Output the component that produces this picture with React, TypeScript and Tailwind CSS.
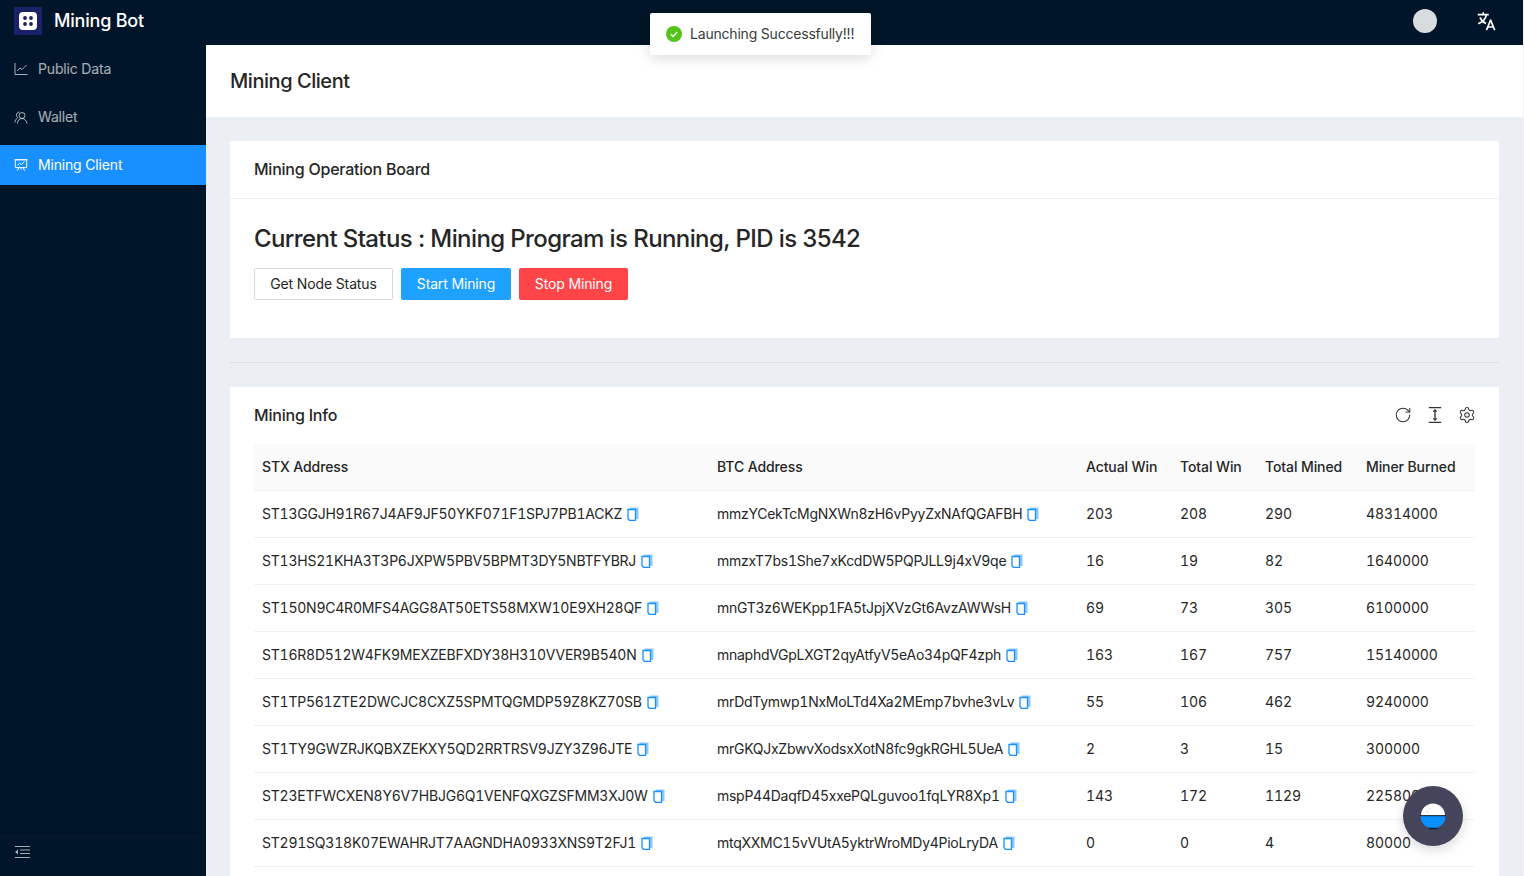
import React from "react";
import { RotateCw, Settings } from "lucide-react";

const rows = [
  ["ST13GGJH91R67J4AF9JF50YKF071F1SPJ7PB1ACKZ", "mmzYCekTcMgNXWn8zH6vPyyZxNAfQGAFBH", "203", "208", "290", "48314000"],
  ["ST13HS21KHA3T3P6JXPW5PBV5BPMT3DY5NBTFYBRJ", "mmzxT7bs1She7xKcdDW5PQPJLL9j4xV9qe", "16", "19", "82", "1640000"],
  ["ST150N9C4R0MFS4AGG8AT50ETS58MXW10E9XH28QF", "mnGT3z6WEKpp1FA5tJpjXVzGt6AvzAWWsH", "69", "73", "305", "6100000"],
  ["ST16R8D512W4FK9MEXZEBFXDY38H310VVER9B540N", "mnaphdVGpLXGT2qyAtfyV5eAo34pQF4zph", "163", "167", "757", "15140000"],
  ["ST1TP561ZTE2DWCJC8CXZ5SPMTQGMDP59Z8KZ70SB", "mrDdTymwp1NxMoLTd4Xa2MEmp7bvhe3vLv", "55", "106", "462", "9240000"],
  ["ST1TY9GWZRJKQBXZEKXY5QD2RRTRSV9JZY3Z96JTE", "mrGKQJxZbwvXodsxXotN8fc9gkRGHL5UeA", "2", "3", "15", "300000"],
  ["ST23ETFWCXEN8Y6V7HBJG6Q1VENFQXGZSFMM3XJ0W", "mspP44DaqfD45xxePQLguvoo1fqLYR8Xp1", "143", "172", "1129", "22580000"],
  ["ST291SQ318K07EWAHRJT7AAGNDHA0933XNS9T2FJ1", "mtqXXMC15vVUtA5yktrWroMDy4PioLryDA", "0", "0", "4", "80000"],
];

function Copy() {
  return (
    <svg width="12" height="14" viewBox="0 0 12 14" className="inline-block ml-[5px] -mt-[2px] align-middle">
      <path d="M2.500 0.500h9v11.500h-2.500V2.500H2.500z" fill="#8cc8ff" />
      <path d="M1 2.500h7.500v11H2.500L1 11.500z" fill="#fff" stroke="#1890ff" strokeWidth="1.300" />
    </svg>
  );
}

function NavItem({ label, active, children }: { label: string; active?: boolean; children: React.ReactNode }) {
  return (
    <div className={`h-10 mb-2 pl-[14px] flex items-center gap-[10px] text-sm tracking-[-0.17px] ${active ? "bg-[#1890ff] text-white" : "text-white/65"}`}>
      <span className="w-[14px] h-[14px] flex items-center justify-center">{children}</span>
      <span>{label}</span>
    </div>
  );
}

export default function App() {
  return (
    <div className="w-[1524px] h-[876px] overflow-hidden relative bg-[#ebeff3] text-[#262626] flex flex-col border-r border-[#f0f2f5]" style={{ fontFamily: "Inter, 'Liberation Sans', sans-serif" }}>
      <header className="h-[45px] shrink-0 bg-[#001529] flex items-center justify-between pl-[14px] pr-[26px] pb-[3px]">
        <div className="flex items-center gap-3">
          <div className="w-7 h-7 bg-[#1b2167] flex items-center justify-center">
            <svg width="18" height="18" viewBox="0 0 18 18">
              <rect width="18" height="18" rx="4" fill="#fff" />
              <circle cx="6" cy="6" r="1.9" fill="#1b2167" />
              <circle cx="12" cy="6" r="1.9" fill="#1b2167" />
              <circle cx="6" cy="12" r="1.9" fill="#1b2167" />
              <circle cx="12" cy="12" r="1.9" fill="#1b2167" />
            </svg>
          </div>
          <span className="text-white text-lg font-medium tracking-[-0.2px]">Mining Bot</span>
        </div>
        <div className="flex items-center gap-[38px]">
          <div className="w-6 h-6 rounded-full bg-[#d9dcdf]" />
          <svg width="22" height="22" viewBox="0 0 24 24" fill="none" stroke="#fff" strokeWidth="1.8" strokeLinejoin="round">
            <path d="M3 5h12M9 2.500V5M12.500 5c-.8 4.500-4 8-9 10M5.500 8c1.200 3 3.700 5.500 6.500 6.800" />
            <path d="M12.500 22l4.500-11 4.500 11M14 18.500h6" />
          </svg>
        </div>
      </header>

      <div className="flex flex-1 min-h-0">
        <aside className="w-[206px] shrink-0 bg-[#001529] flex flex-col pt-1">
          <NavItem label="Public Data">
            <svg width="14" height="14" viewBox="0 0 14 14" fill="none" stroke="currentColor" strokeWidth="1">
              <path d="M1 1v11.500h12.500M3 9l3-3 2 1.500 4.500-4.500" />
            </svg>
          </NavItem>
          <NavItem label="Wallet">
            <svg width="15" height="15" viewBox="0 0 14 14" fill="none" stroke="currentColor" strokeWidth="1">
              <circle cx="8" cy="5" r="3" />
              <path d="M3.500 13c0-3 1.800-5 4.500-5s4.500 2 5 5M5.500 1.500C3.500 1.500 2.500 3 2.500 4.800c0 1 .5 2 1.500 2.700M3.500 7.500C2 8.500 1 10 1 12" />
            </svg>
          </NavItem>
          <NavItem label="Mining Client" active>
            <svg width="16" height="16" viewBox="0 0 16 16" fill="none" stroke="currentColor" strokeWidth="1.100">
              <rect x="1.500" y="2" width="13" height="9" rx=".5" />
              <path d="M.5 2h15M4 8.500l2.500-2.500 2 1.500 3.500-3.500M5.500 11l-1.500 3.500M10.500 11l1.500 3.500M8 11v2" />
            </svg>
          </NavItem>
          <div className="mt-auto h-[44px] border-t border-[#00101f] flex items-center pl-[15px] pb-[5px] text-white/65">
            <svg width="15" height="14" viewBox="0 0 15 14" fill="currentColor">
              <rect y="1" width="15" height="1" />
              <rect x="5" y="4.500" width="10" height="1" />
              <rect x="5" y="8" width="10" height="1" />
              <rect y="12" width="15" height="1" />
              <path d="M0 7l3-2.500v5z" />
            </svg>
          </div>
        </aside>

        <main className="flex-1 min-w-0 flex flex-col">
          <div className="h-[72px] shrink-0 bg-white flex items-center px-6 text-xl font-medium tracking-[-0.45px]">Mining Client</div>
          <div className="px-6 pt-6">
            <section className="bg-white h-[197px]">
              <div className="h-[58px] border-b border-[#f0f0f0] px-6 pb-[2px] flex items-center text-base font-medium tracking-[-0.23px]">Mining Operation Board</div>
              <div className="px-6 pt-6">
                <h2 className="text-2xl font-medium leading-8 mb-[13px] tracking-[-0.6px]">Current Status : Mining Program is Running, PID is 3542</h2>
                <div className="flex gap-2 text-sm tracking-[-0.14px]">
                  <button className="h-8 w-[139px] bg-white border border-[#d9d9d9] rounded-[2px]">Get Node Status</button>
                  <button className="h-8 w-[110px] bg-[#1ea1ff] text-white rounded-[2px]">Start Mining</button>
                  <button className="h-8 w-[109px] bg-[#ff4548] text-white rounded-[2px]">Stop Mining</button>
                </div>
              </div>
            </section>
            <div className="h-px bg-[#dde0e3] my-6" />
            <section className="bg-white px-6 pb-10">
              <div className="h-[57px] pb-[2px] flex items-center justify-between text-base font-medium tracking-[-0.2px]">
                <span>Mining Info</span>
                <div className="flex items-center gap-[14px] text-[#333] -mr-px">
                  <RotateCw size={18} strokeWidth={1.4} />
                  <svg width="18" height="18" viewBox="0 0 16 16" fill="none" stroke="currentColor" strokeWidth="1.200">
                    <path d="M2.500 1.500h11M2.500 14.500h11M8 4v8" />
                    <path d="M6.500 5L8 3.500 9.500 5M6.500 11L8 12.500 9.500 11" />
                  </svg>
                  <Settings size={18} strokeWidth={1.4} />
                </div>
              </div>
              <table className="w-full table-fixed text-sm border-collapse tabular-nums tracking-[-0.1px]">
                <colgroup>
                  <col className="w-[455px]" />
                  <col className="w-[369px]" />
                  <col className="w-[94px]" />
                  <col className="w-[85px]" />
                  <col className="w-[101px]" />
                  <col />
                </colgroup>
                <thead>
                  <tr className="h-[46px] bg-[#fafafa] border-b border-[#f0f0f0] text-left">
                    {["STX Address", "BTC Address", "Actual Win", "Total Win", "Total Mined", "Miner Burned"].map((h) => (
                      <th key={h} className="px-2 font-medium">{h}</th>
                    ))}
                  </tr>
                </thead>
                <tbody>
                  {rows.map((r) => (
                    <tr key={r[0]} className="h-[47px] border-b border-[#f0f0f0]">
                      <td className="px-2 whitespace-nowrap tracking-[-0.23px]">{r[0]}<Copy /></td>
                      <td className="px-2 whitespace-nowrap tracking-[-0.27px]">{r[1]}<Copy /></td>
                      <td className="px-2">{r[2]}</td>
                      <td className="px-2">{r[3]}</td>
                      <td className="px-2">{r[4]}</td>
                      <td className="px-2">{r[5]}</td>
                    </tr>
                  ))}
                </tbody>
              </table>
            </section>
          </div>
        </main>
      </div>

      <div className="absolute left-[650px] top-[13px] h-[42px] w-[221px] bg-white rounded-[2px] shadow-[0_3px_14px_rgba(0,0,0,0.14)] flex items-center pl-4 gap-2 text-sm text-[#3a3a3a] tracking-[-0.2px]">
        <svg width="16" height="16" viewBox="0 0 16 16">
          <circle cx="8" cy="8" r="8" fill="#52c41a" />
          <path d="M4.800 8.200l2.200 2.200 4.200-4.400" fill="none" stroke="#fff" strokeWidth="1.400" />
        </svg>
        <span>Launching Successfully!!!</span>
      </div>

      <div className="absolute left-[1403px] top-[786px] w-[60px] h-[60px] rounded-full bg-[#44455a] shadow-[0_4px_12px_rgba(0,0,0,0.15)] flex items-center justify-center">
        <svg width="28" height="28" viewBox="0 0 28 28">
          <path d="M2 13.500a12 12 0 0 1 24 0z" fill="#fff" />
          <path d="M1.500 14h25a12.500 12.500 0 0 1-8 11.500v1.500h-9v-1.500A12.500 12.500 0 0 1 1.500 14z" fill="#0a8fff" />
          <path d="M1 13.700h26" stroke="#0b1b33" strokeWidth="1" />
          <path d="M9.500 26.500h9" stroke="#0b1b33" strokeWidth="1.500" />
          <path d="M7 8h1M8 10h1M10 7h1" stroke="#bbb" strokeWidth=".8" />
        </svg>
      </div>
    </div>
  );
}
